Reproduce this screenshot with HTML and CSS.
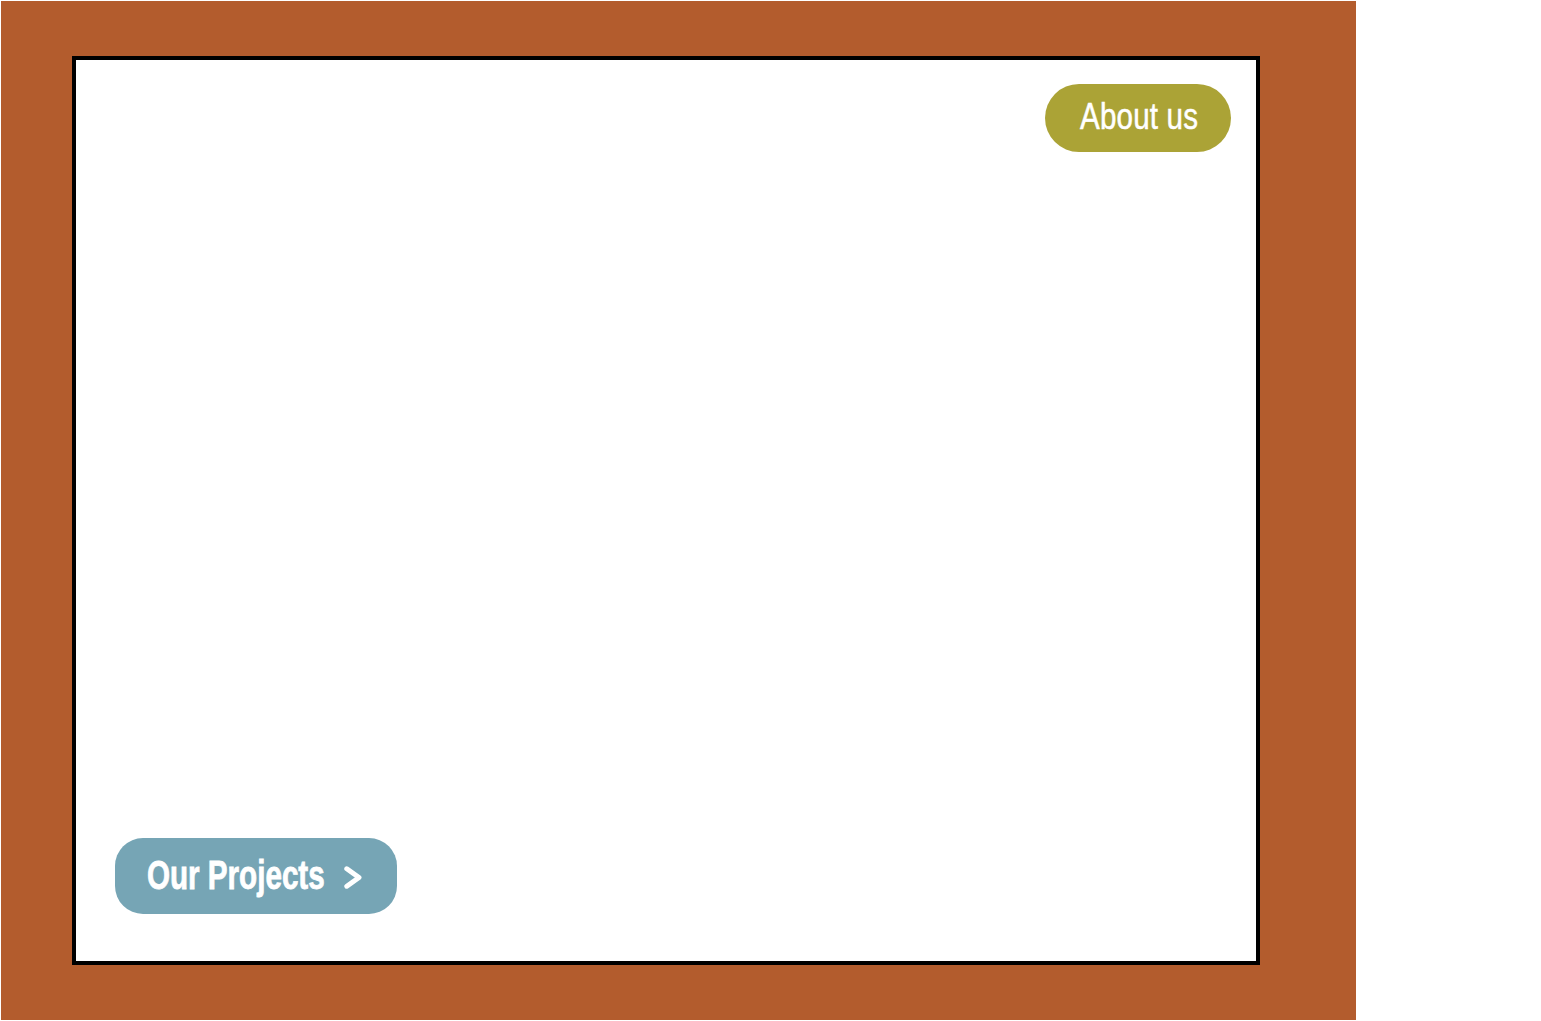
FILE: index.html
```html
<!DOCTYPE html>
<html>
<head>
<meta charset="utf-8">
<link rel="stylesheet" href="styles.css">
</head>
<body>
<div class="frame">
  <div class="panel">
    <div class="top">
      <a class="btn about"><span class="label about-label">About us</span></a>
    </div>
    <div class="bottom">
      <a class="btn projects"><span class="label projects-label">Our Projects</span><svg class="chev" viewBox="0 0 18 23" width="18" height="23"><path d="M2.8 2.8 L15 11.5 L2.8 20.2" fill="none" stroke="#fff" stroke-width="5" stroke-linecap="round" stroke-linejoin="round"/></svg></a>
    </div>
  </div>
</div>
</body>
</html>
```
FILE: styles.css
```css
html, body {
  margin: 0;
  padding: 0;
  background: #ffffff;
}
.frame {
  margin: 1px 0 0 1px;
  width: 1355px;
  height: 1019px;
  background: #b35c2d;
  box-sizing: border-box;
  padding: 55px 96px 55px 71px;
}
.panel {
  box-sizing: border-box;
  width: 1188px;
  height: 909px;
  background: #ffffff;
  border: 4px solid #000;
  display: flex;
  flex-direction: column;
  justify-content: space-between;
  padding: 24px 25px 47px 39px;
}
.top {
  display: flex;
  justify-content: flex-end;
}
.bottom {
  display: flex;
}
.btn {
  display: flex;
  align-items: center;
  justify-content: flex-start;
  color: #fff;
  font-family: "Liberation Sans", Arial, sans-serif;
  box-sizing: border-box;
  overflow: hidden;
}
.label {
  display: inline-block;
  white-space: nowrap;
  transform-origin: left center;
}
.about {
  width: 186px;
  height: 68px;
  border-radius: 34px;
  background: #aba336;
  font-size: 37px;
  padding-left: 35px;
  padding-bottom: 2px;
}
.about-label {
  transform: scaleX(0.8);
  letter-spacing: 0.2px;
  -webkit-text-stroke: 0.5px #fff;
}
.projects {
  width: 282px;
  height: 76px;
  border-radius: 28px;
  background: #76a5b5;
  font-size: 40px;
  font-weight: bold;
  padding-left: 32px;
  padding-bottom: 2px;
}
.projects-label {
  transform: scaleX(0.74);
  margin-right: -43px;
  -webkit-text-stroke: 0.8px #fff;
}
.chev {
  width: 18px;
  height: 23px;
  flex: none;
  margin-top: 4px;
}
```
